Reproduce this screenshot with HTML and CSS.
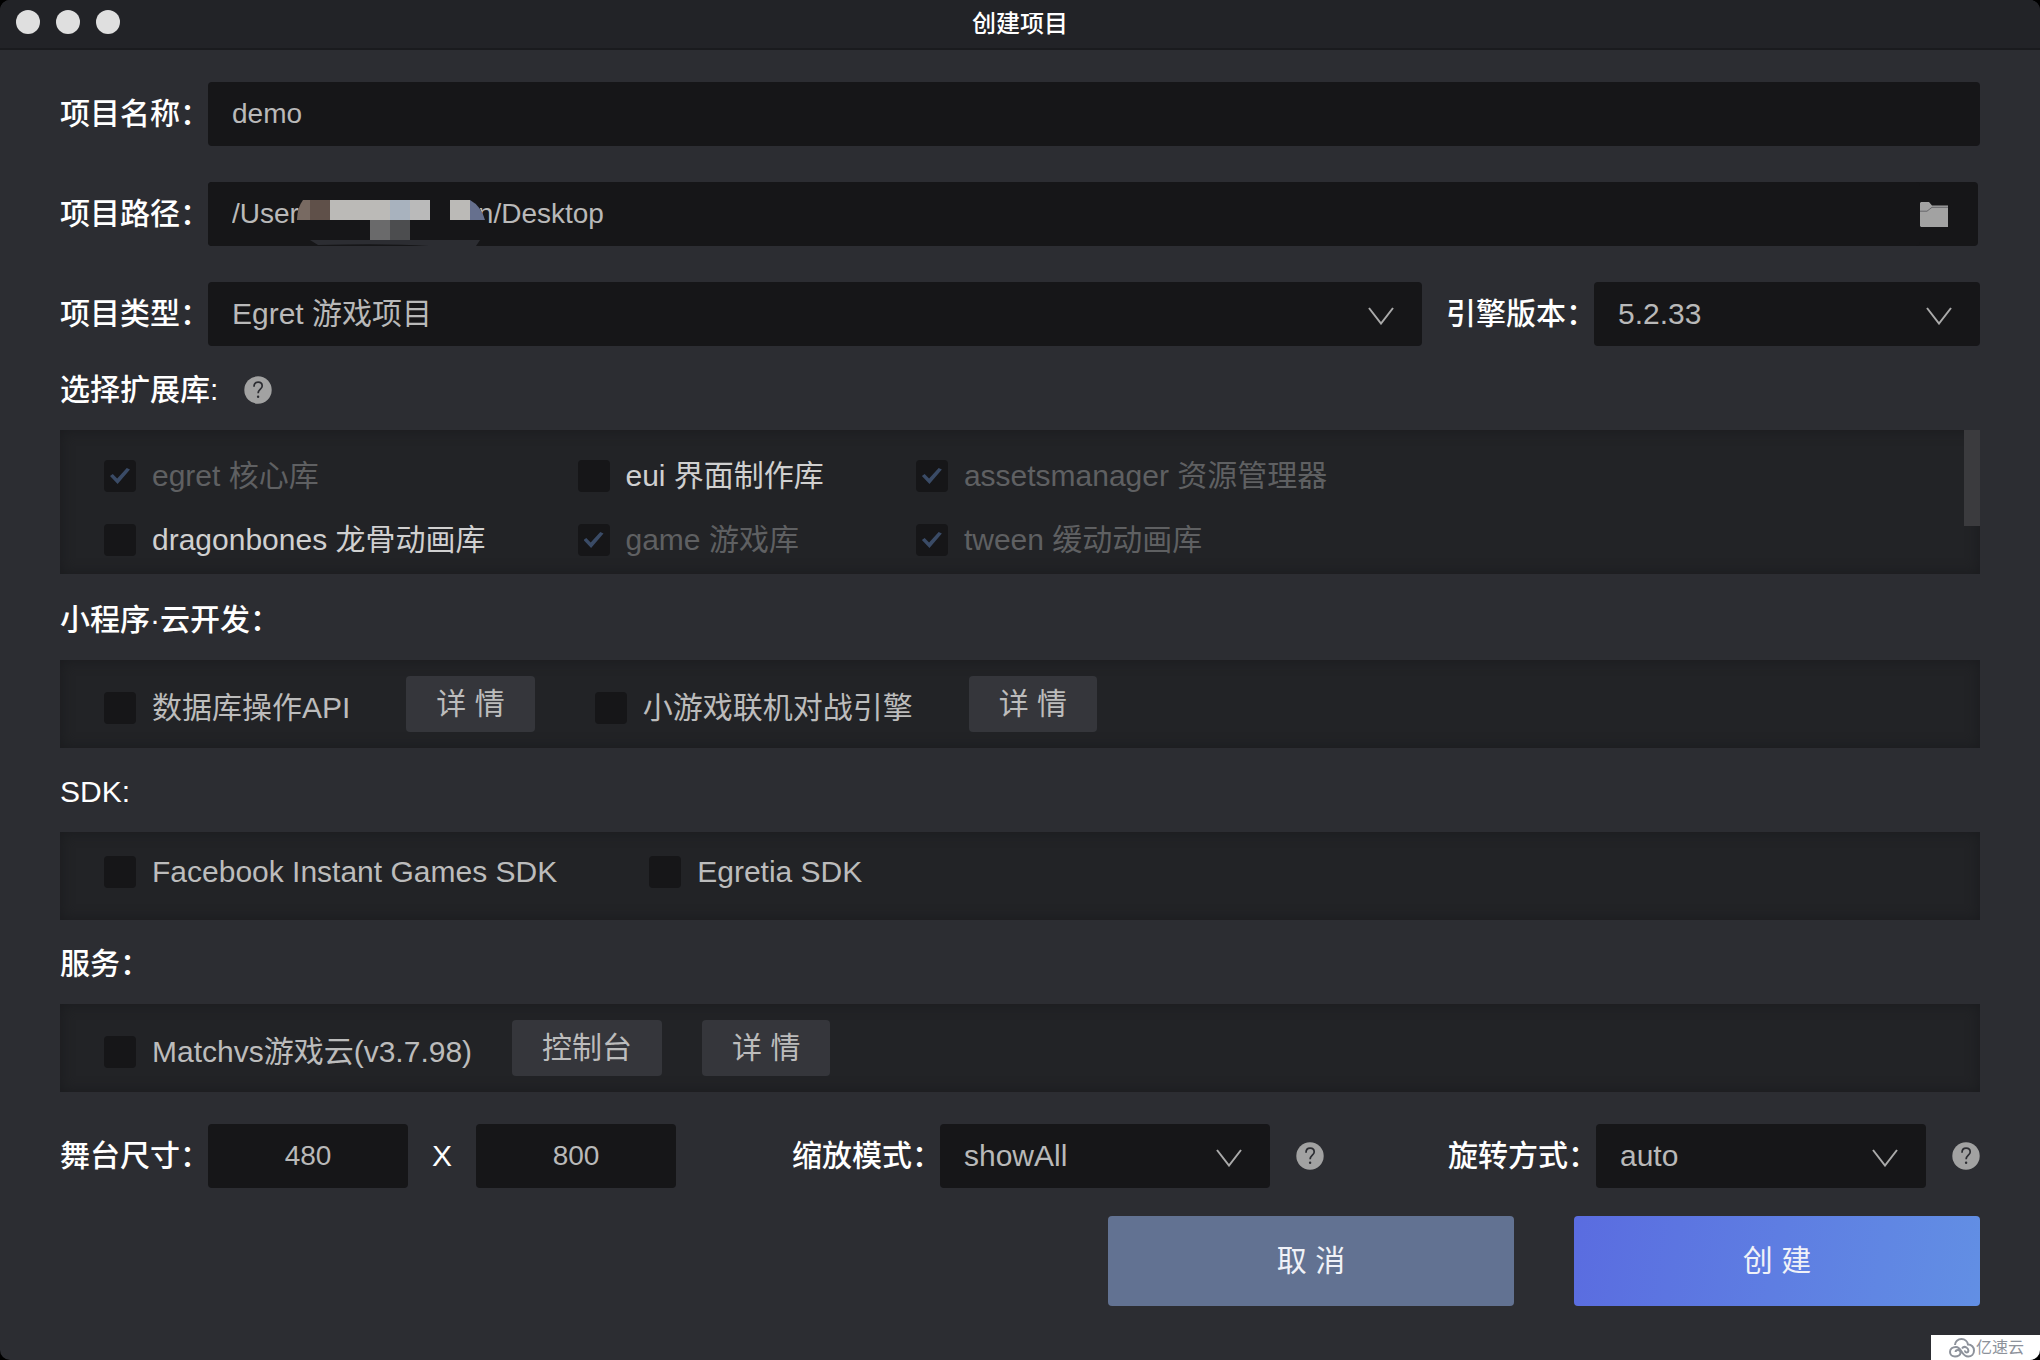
FILE: index.html
```html
<!DOCTYPE html>
<html lang="zh-CN">
<head>
<meta charset="utf-8">
<meta name="viewport" content="width=device-width, initial-scale=1">
<title>创建项目</title>
<link rel="stylesheet" href="styles.css">
</head>
<body>
<svg class="defs" aria-hidden="true">
  <symbol id="chevron" viewBox="0 0 26 18"><path d="M1 1L13 16.500L25 1" fill="none" stroke="currentColor" stroke-width="2"/></symbol>
  <symbol id="help" viewBox="0 0 28 28"><circle cx="14" cy="14" r="13.700" fill="#a2a2a2"/><path d="M10 10.800C10 7.800 11.600 6.200 14.100 6.200C16.600 6.200 18.200 7.800 18.200 10C18.200 13 14.100 13.400 14.100 17.200" fill="none" stroke="#2c2d32" stroke-width="1.700"/><circle cx="14.100" cy="20.800" r="1.200" fill="#2c2d32"/></symbol>
</svg>
<div class="window">
  <header class="titlebar">
    <div class="lights"><span class="light"></span><span class="light"></span><span class="light"></span></div>
    <h1 class="title">创建项目</h1>
  </header>
  <form class="form">
    <div class="rows">
      <div class="row">
        <label class="label" for="name">项目名称：</label>
        <input class="field grow" id="name" type="text" value="demo">
      </div>
      <div class="row row-path">
        <label class="label" for="path">项目路径：</label>
        <div class="path-box">
          <input class="field grow" id="path" type="text" value="/User&nbsp;&nbsp;&nbsp;&nbsp;&nbsp;&nbsp;&nbsp;&nbsp;&nbsp;&nbsp;&nbsp;&nbsp;&nbsp;&nbsp;&nbsp;&nbsp;&nbsp;&nbsp;&nbsp;&nbsp;&nbsp;&nbsp;&nbsp;n/Desktop">
          <svg class="mosaic" viewBox="0 0 190 46" aria-hidden="true">
            <path d="M5 0H178Q184 8 187 20V40H5z" fill="#161618"/>
            <path d="M13 0H6Q0 8 0 20H13z" fill="#786a62"/>
            <path d="M13 0H33V20H13z" fill="#5f5049"/>
            <path d="M33 0H93V20H33z" fill="#bbbab7"/>
            <path d="M93 0H113V20H93z" fill="#a8b2be"/>
            <path d="M113 0H133V20H113z" fill="#bababa"/>
            <path d="M153 0H173V20H153z" fill="#bbbab7"/>
            <path d="M173 0Q184 6 188 20H173z" fill="#66708e"/>
            <path d="M73 20H93V40H73z" fill="#6a6a6b"/>
            <path d="M93 20H113V40H93z" fill="#4c4d4f"/>
            <path d="M13 40H183L179 46H132Q90 43 21 45z" fill="#2c2d32"/>
          </svg>
          <button class="folder" type="button" aria-label="选择文件夹">
            <svg width="28" height="25" viewBox="0 0 28 25" aria-hidden="true"><path d="M1 0H9L12 3.500H28V25H1L0 24V1z" fill="#a2a2a2"/><path d="M0 9.200H7L12 5.300H28" fill="none" stroke="#66666a" stroke-width="1"/></svg>
          </button>
        </div>
      </div>
      <div class="row">
        <label class="label" for="type">项目类型：</label>
        <div class="select grow">
          <select class="field text-lg" id="type"><option>Egret 游戏项目</option></select>
          <svg class="chevron"><use href="#chevron"/></svg>
        </div>
        <label class="label label-next" for="version">引擎版本：</label>
        <div class="select select-version">
          <select class="field text-lg" id="version"><option>5.2.33</option></select>
          <svg class="chevron"><use href="#chevron"/></svg>
        </div>
      </div>
    </div>

    <section>
      <h2 class="heading">选择扩展库:<svg class="help"><use href="#help"/></svg></h2>
      <div class="panel panel-libs">
        <label class="check"><input type="checkbox" checked disabled><span>egret 核心库</span></label>
        <label class="check check-bright"><input type="checkbox"><span>eui 界面制作库</span></label>
        <label class="check"><input type="checkbox" checked disabled><span>assetsmanager 资源管理器</span></label>
        <label class="check check-bright"><input type="checkbox"><span>dragonbones 龙骨动画库</span></label>
        <label class="check"><input type="checkbox" checked disabled><span>game 游戏库</span></label>
        <label class="check"><input type="checkbox" checked disabled><span>tween 缓动动画库</span></label>
        <div class="thumb"></div>
      </div>
    </section>

    <section>
      <h2 class="heading">小程序·云开发：</h2>
      <div class="panel panel-actions">
        <div class="item item-wide">
          <label class="check"><input type="checkbox"><span>数据库操作API</span></label>
          <button class="small" type="button">详 情</button>
        </div>
        <div class="item item-wide">
          <label class="check"><input type="checkbox"><span>小游戏联机对战引擎</span></label>
          <button class="small" type="button">详 情</button>
        </div>
      </div>
    </section>

    <section>
      <h2 class="heading">SDK:</h2>
      <div class="panel panel-sdk">
        <label class="check"><input type="checkbox"><span>Facebook Instant Games SDK</span></label>
        <label class="check"><input type="checkbox"><span>Egretia SDK</span></label>
      </div>
    </section>

    <section>
      <h2 class="heading">服务：</h2>
      <div class="panel panel-actions">
        <div class="item">
          <label class="check"><input type="checkbox"><span>Matchvs游戏云(v3.7.98)</span></label>
          <button class="small" type="button">控制台</button>
          <button class="small" type="button">详 情</button>
        </div>
      </div>
    </section>

    <div class="stage">
      <div class="row">
        <label class="label" for="width">舞台尺寸：</label>
        <input class="field size" id="width" type="text" value="480">
        <span class="times">X</span>
        <input class="field size" type="text" value="800" aria-label="舞台高度">
      </div>
      <div class="row">
        <label class="label" for="scale">缩放模式：</label>
        <div class="select select-mode">
          <select class="field text-lg" id="scale"><option>showAll</option></select>
          <svg class="chevron"><use href="#chevron"/></svg>
        </div>
        <svg class="help"><use href="#help"/></svg>
      </div>
      <div class="row row-end">
        <label class="label" for="rotate">旋转方式：</label>
        <div class="select select-mode">
          <select class="field text-lg" id="rotate"><option>auto</option></select>
          <svg class="chevron"><use href="#chevron"/></svg>
        </div>
        <svg class="help"><use href="#help"/></svg>
      </div>
    </div>

    <div class="actions">
      <button class="big" type="button">取 消</button>
      <button class="big big-primary" type="submit">创 建</button>
    </div>
  </form>
  <div class="badge">
    <svg width="26" height="20" viewBox="0 0 26 20" fill="none" stroke="#8d929b" stroke-width="2" aria-hidden="true"><path d="M6 7C6 3.500 9 1 12.500 1C16 1 18.500 3.500 19 6.500C22.500 6.500 25 9.200 25 12.500C25 16 22.500 18.500 19.200 18.500C16 18.500 14 16 12.500 13.500C11 11 9.500 9 7 9C3.500 9 1 11 1 14C1 16.800 3.300 18.500 6 18.500C9 18.500 11.500 17 11.500 14.500C11.500 13 10.300 12 9 12C7.600 12 6.600 12.800 6.600 14"/><path d="M13 10.500C14 9 15.800 8.500 17.500 9.500C20 11 20 14.500 17.500 14.500C16.300 14.500 15.800 13.500 16.300 12.500"/></svg>
    <span>亿速云</span>
  </div>
</div>
</body>
</html>
```

FILE: styles.css
```css
* { box-sizing: border-box; }

html { background: #000; }

body {
  margin: 0;
  color: #fff;
  font: 30px/40px "Liberation Sans", "Noto Sans CJK SC", sans-serif;
}

button, input, select { font: inherit; margin: 0; }

.defs { position: absolute; width: 0; height: 0; }

.window {
  position: relative;
  min-height: 100vh;
  background: #2c2d32;
  border-radius: 10px;
  overflow: hidden;
}

.titlebar {
  display: grid;
  grid-template-columns: 1fr auto 1fr;
  align-items: center;
  height: 50px;
  padding: 0 16px;
  background: #222327;
  border-bottom: 2px solid #1a1b1e;
}

.lights { display: flex; gap: 16px; padding-bottom: 4px; }

.light {
  width: 24px;
  height: 24px;
  border-radius: 50%;
  background: #dfdfdf;
}

.title { margin: 0; font-size: 24px; line-height: 32px; font-weight: 500; }

.form { padding: 32px 60px 54px; }

.rows { display: flex; flex-direction: column; gap: 36px; }

.row { display: flex; align-items: center; }
.row-path { padding-right: 2px; }
.row-end { margin-left: auto; }

.label {
  flex: none;
  width: 148px;
  font-weight: 500;
  white-space: nowrap;
}
.label-next { margin-left: 24px; }

.grow { flex: 1; min-width: 0; }

.field {
  display: block;
  height: 64px;
  padding: 0 24px;
  border: 0;
  border-radius: 4px;
  outline: 0;
  background: #161618;
  color: #b9b9b9;
  font-size: 28px;
}

.text-lg { font-size: 30px; }

.path-box {
  position: relative;
  display: flex;
  flex: 1;
  align-items: center;
  padding-right: 30px;
  border-radius: 4px;
  background: #161618;
}

.mosaic {
  position: absolute;
  left: 89px;
  top: 18px;
  width: 190px;
  height: 46px;
}

.folder {
  display: flex;
  padding: 0;
  border: 0;
  background: none;
}

.select { position: relative; }

.select .field { width: 100%; appearance: none; }

.select-version { width: 386px; }
.select-mode { width: 330px; }

.chevron {
  position: absolute;
  right: 28px;
  top: 25px;
  width: 26px;
  height: 18px;
  color: #aaa;
  pointer-events: none;
}

.help { flex: none; width: 28px; height: 28px; }
.row .help { margin-left: 26px; }

.heading {
  display: flex;
  align-items: center;
  gap: 26px;
  height: 84px;
  margin: 0;
  padding-top: 4px;
  font-size: 30px;
  font-weight: 500;
}

.panel {
  position: relative;
  display: flex;
  padding: 16px 44px;
  background: #222326;
  box-shadow: inset 0 0 14px #1a1b1e;
}

.panel-libs {
  display: grid;
  grid-template-columns: repeat(3, auto);
  justify-content: start;
  gap: 32px 92px;
  padding: 30px 44px 18px;
  margin-bottom: 2px;
}

.panel-actions { gap: 60px; }
.panel-actions .check { padding-top: 8px; }

.panel-sdk { gap: 92px; padding: 24px 44px 32px; }

.thumb {
  position: absolute;
  top: 0;
  right: 0;
  width: 16px;
  height: 96px;
  background: #3b3b3e;
}

.item { display: flex; align-items: center; gap: 40px; }
.item-wide { gap: 56px; }

.check {
  display: flex;
  align-items: center;
  gap: 16px;
  color: #bcbcbc;
  line-height: 32px;
  white-space: nowrap;
}

.check-bright { color: #d0d0d0; }

.check:has(:disabled) { color: #5f6062; }

.check input {
  appearance: none;
  display: grid;
  place-items: center;
  flex: none;
  width: 32px;
  height: 32px;
  border-radius: 4px;
  background: #161618;
}

.check input:checked::before {
  content: "";
  width: 20px;
  height: 16px;
  background: #3a4b66;
  clip-path: polygon(0 50%, 14% 38%, 36% 66%, 84% 0, 100% 10%, 38% 100%);
}

.small {
  height: 56px;
  padding: 0 30px;
  border: 0;
  border-radius: 4px;
  background: #35363b;
  color: #bcbcbc;
  white-space: nowrap;
}

.stage { display: flex; gap: 116px; margin-top: 32px; }

.size { width: 200px; text-align: center; }

.times { width: 68px; text-align: center; }

.actions {
  display: flex;
  justify-content: flex-end;
  gap: 60px;
  margin-top: 28px;
}

.big {
  width: 406px;
  height: 90px;
  border: 0;
  border-radius: 4px;
  background: #627292;
  color: #f0f2f8;
}

.big-primary { background: linear-gradient(100deg, #5a6ce0, #628fe4); }

.badge {
  position: absolute;
  right: 0;
  bottom: 0;
  display: flex;
  align-items: center;
  gap: 1px;
  width: 109px;
  height: 25px;
  padding-left: 18px;
  background: #fff;
  color: #8d929b;
  font-size: 16px;
  line-height: 24px;
}
```
